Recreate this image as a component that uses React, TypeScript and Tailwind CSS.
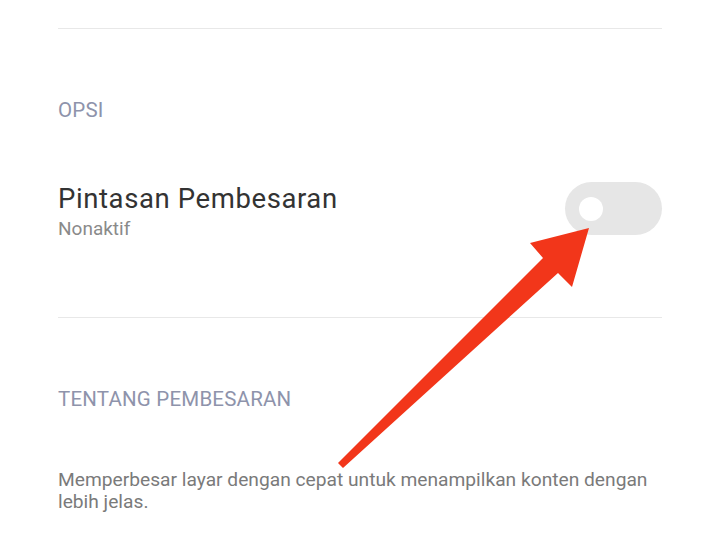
import React from "react";

export default function App() {
  return (
    <div className="relative w-[720px] h-[540px] overflow-hidden bg-white" style={{ fontFamily: "Roboto, 'Noto Sans', sans-serif" }}>
      <div className="px-[58px] pt-[28px]">
        <div className="h-px bg-[#e8e8e8]" />
        <div className="mt-[69px] text-[20.5px] leading-[24px] tracking-[0.2px] text-[#8e93ab]">OPSI</div>
        <div className="mt-[60px] flex items-start justify-between">
          <div className="flex flex-col pt-[1px]">
            <div className="text-[27.5px] leading-[32px] tracking-[0.6px] text-[#333333]">Pintasan Pembesaran</div>
            <div className="mt-[2px] text-[19px] leading-[24px] text-[#8a8a8a]">Nonaktif</div>
          </div>
          <div className="w-[97px] h-[53px] rounded-full bg-[#e6e6e6] flex items-center pl-[14px]">
            <div className="w-[24px] h-[24px] rounded-full bg-white" />
          </div>
        </div>
        <div className="mt-[76px] h-px bg-[#e8e8e8]" />
        <div className="mt-[69px] text-[20.5px] leading-[24px] tracking-[0.2px] text-[#8e93ab]">TENTANG PEMBESARAN</div>
        <div className="mt-[58px] text-[19.2px] leading-[22px] text-[#7a7a7a]">
          Memperbesar layar dengan cepat untuk menampilkan konten dengan lebih jelas.
        </div>
      </div>
      <svg className="absolute left-0 top-0" width="720" height="540" viewBox="0 0 720 540">
        <polygon
          points="589,228 530,243 543,258 338,463 343,468 558,273 572,287"
          fill="#f2361a"
        />
      </svg>
    </div>
  );
}
